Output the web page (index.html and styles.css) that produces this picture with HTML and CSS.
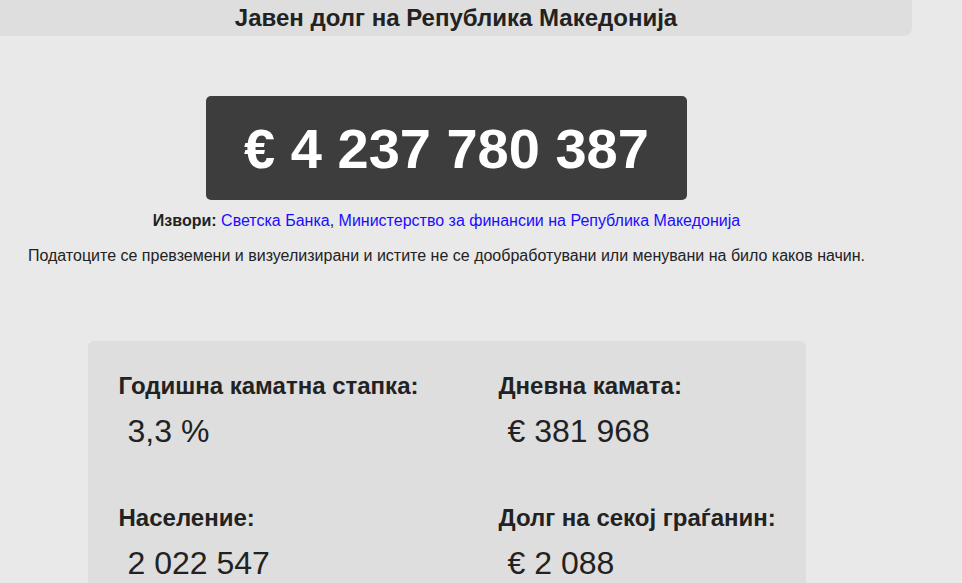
FILE: index.html
```html
<!DOCTYPE html>
<html lang="mk">
  <head>
    <meta charset="UTF-8" />
    <meta name="viewport" content="width=device-width, initial-scale=1.0" />
    <link rel="stylesheet" href="styles.css">
    <title>Јавен долг на Република Македонија</title>
  </head>
  <body>
    <div class="header">
      <h1>Јавен долг на Република Македонија</h1>
    </div>

    <div class="main">
      <!-- total debt -->
      <div class="debt-box">€ 4 237 780 387</div>

      <p class="sources">
        <b>Извори:</b>
        <a href="#">Светска Банка</a>, <a href="#">Министерство за финансии на Република Македонија</a>
      </p>
      <p class="note">Податоците се превземени и визуелизирани и истите не се дообработувани или менувани на било каков начин.</p>

      <!-- stats -->
      <div class="stats">
        <div class="stat">
          <div class="stat-label">Годишна каматна стапка:</div>
          <div class="stat-value">3,3 %</div>
        </div>
        <div class="stat">
          <div class="stat-label">Дневна камата:</div>
          <div class="stat-value">€ 381 968</div>
        </div>
        <div class="stat">
          <div class="stat-label">Население:</div>
          <div class="stat-value">2 022 547</div>
        </div>
        <div class="stat">
          <div class="stat-label">Долг на секој граѓанин:</div>
          <div class="stat-value">€ 2 088</div>
        </div>
      </div>
    </div>
  </body>
</html>
```

FILE: styles.css
```css
body {
  margin: 0;
  background-color: #e9e9e9;
  font-family: "Liberation Sans", Arial, sans-serif;
  color: #222;
}

.header {
  width: 912px;
  height: 36px;
  background-color: #dedede;
  border-radius: 0 0 8px 0;
}

.header h1 {
  margin: 0;
  font-size: 24px;
  line-height: 36px;
  text-align: center;
}

.main {
  width: 893px;
  display: flex;
  flex-direction: column;
  align-items: center;
}

.debt-box {
  margin-top: 60px;
  width: 481px;
  height: 104px;
  background-color: #3d3d3d;
  color: white;
  border-radius: 5px;
  display: flex;
  justify-content: center;
  align-items: center;
  font-size: 56px;
  font-weight: bold;
}

.sources,
.note {
  font-size: 16px;
  line-height: 18px;
  margin: 0;
  text-align: center;
}

.sources {
  margin-top: 12px;
}

.sources a {
  color: #1a0dff;
  text-decoration: none;
}

.note {
  margin-top: 17px;
}

.stats {
  margin-top: 76px;
  width: 718px;
  height: 300px;
  box-sizing: border-box;
  padding: 32px 31px 0;
  background-color: #dedede;
  border-radius: 6px;
  display: grid;
  grid-template-columns: 380px 1fr;
  row-gap: 55px;
  align-content: start;
}

.stat-label {
  font-size: 24px;
  font-weight: bold;
  line-height: 26px;
  white-space: nowrap;
}

.stat-value {
  margin-top: 14px;
  padding-left: 9px;
  font-size: 32px;
  line-height: 37px;
}
```
